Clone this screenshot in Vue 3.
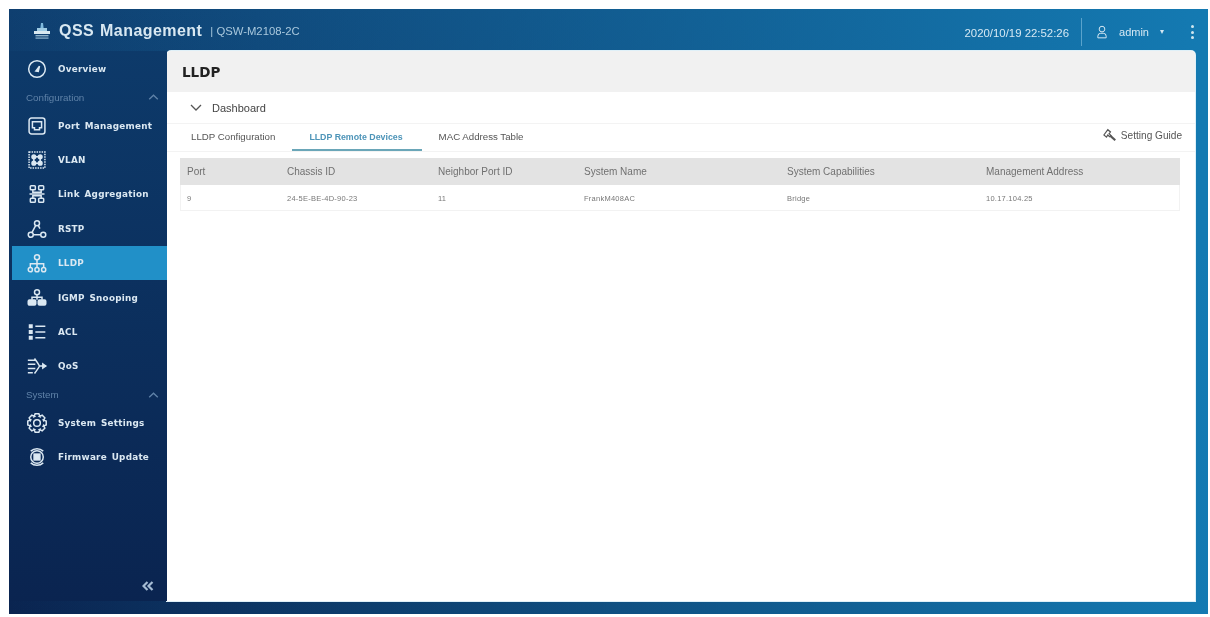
<script setup>
const navTop = [{ key: "overview", label: "Overview" }];
const navConfig = [
  { key: "port", label: "Port Management" },
  { key: "vlan", label: "VLAN" },
  { key: "lag", label: "Link Aggregation" },
  { key: "rstp", label: "RSTP" },
  { key: "lldp", label: "LLDP", active: true },
  { key: "igmp", label: "IGMP Snooping" },
  { key: "acl", label: "ACL" },
  { key: "qos", label: "QoS" }
];
const navSystem = [
  { key: "settings", label: "System Settings" },
  { key: "firmware", label: "Firmware Update" }
];

const tabs = [
  { label: "LLDP Configuration" },
  { label: "LLDP Remote Devices", active: true },
  { label: "MAC Address Table" }
];

const columns = ["Port", "Chassis ID", "Neighbor Port ID", "System Name", "System Capabilities", "Management Address"];
const rows = [["9", "24-5E-BE-4D-90-23", "11", "FrankM408AC", "Bridge", "10.17.104.25"]];

// eight teeth around the centre of the 24 box
const gearPath = () => {
  const pts = [];
  for (let i = 0; i < 8; i++) {
    const a = (i * Math.PI) / 4;
    [[-0.42, 8.4], [-0.2, 11.3], [0.2, 11.3], [0.42, 8.4]].forEach(([da, r]) => {
      pts.push(`${(12 + r * Math.sin(a + da)).toFixed(2)} ${(12 - r * Math.cos(a + da)).toFixed(2)}`);
    });
  }
  return `M${pts.join("L")}Z`;
};

// icon bodies, all on a 24x24 box
const icons = {
  overview: '<circle cx="12" cy="12" r="10"/><path d="M10.5 14.5 L15 8.5 L13.5 15 Z" fill="currentColor"/>',
  port: '<rect x="2.5" y="2.5" width="19" height="19" rx="3"/><path d="M6.5 7h11v7h-2.5v2.5h-6v-2.5h-2.5z"/>',
  vlan: '<rect x="2.5" y="2.5" width="19" height="19" stroke-dasharray="1.8 1.2"/><circle cx="8.2" cy="8.2" r="2.2" fill="currentColor"/><circle cx="15.8" cy="8.2" r="2.2" fill="currentColor"/><circle cx="8.2" cy="15.8" r="2.2" fill="currentColor"/><circle cx="15.8" cy="15.8" r="2.2" fill="currentColor"/><path d="M10.4 8.2h3.2M10.4 15.8h3.2M8.2 10.4v3.2M15.8 10.4v3.2"/>',
  lag: '<rect x="4" y="2" width="6" height="5" rx="1"/><rect x="14" y="2" width="6" height="5" rx="1"/><rect x="4" y="17" width="6" height="5" rx="1"/><rect x="14" y="17" width="6" height="5" rx="1"/><path d="M7 7v3h10V7M7 17v-3h10v3M3 12h18"/>',
  rstp: '<circle cx="12" cy="5" r="3"/><circle cx="4.5" cy="19" r="3"/><circle cx="19.5" cy="19" r="3"/><path d="M10.5 7.6 5.9 16.4M7.5 19h9M13.5 7.6l2 4" />',
  lldp: '<circle cx="12" cy="5" r="3"/><circle cx="4" cy="20" r="2.5"/><circle cx="12" cy="20" r="2.5"/><circle cx="20" cy="20" r="2.5"/><path d="M12 8v9.5M4 17.5V13h16v4.5"/>',
  igmp: '<circle cx="12" cy="5" r="3"/><path d="M12 8v6M6 14V11h12v3"/><rect x="1.5" y="14.5" width="9" height="6" rx="1.5" fill="currentColor"/><rect x="13.5" y="14.5" width="9" height="6" rx="1.5" fill="currentColor"/>',
  acl: '<path d="M10 5h12M10 12h12M10 19h12"/><path d="M3 3.5h3v3H3zM3 10.5h3v3H3zM3 17.5h3v3H3z" fill="currentColor"/>',
  qos: '<path d="M1 5h9M1 10h9M1 15h9M1 20h6M9 3c3 4 5 7 6 9-1 2-3 5-6 9M15 12h8"/><path d="M19 9.5v5l3.5-2.5z" fill="currentColor"/>',
  settings: `<circle cx="12" cy="12" r="4"/><path d="${gearPath()}"/>`,
  firmware: '<path d="M4.5 5a11 11 0 0 1 15 0M19.5 19a11 11 0 0 1-15 0"/><circle cx="12" cy="12" r="7.5"/><rect x="8.5" y="8.5" width="7" height="7" fill="currentColor"/>'
};
</script>

<template>
  <div class="frame">
    <header class="topbar">
      <div class="brand">
        <svg class="logo" viewBox="0 0 16 16">
          <path d="M7 0h2l.6 5H6.4z" fill="#7fb9dc" />
          <rect x="3" y="5" width="10" height="3" fill="#9fcbe3" />
          <rect x="0" y="8" width="16" height="3" fill="#d8e8f0" />
          <rect x="1.5" y="12" width="13" height="1.4" fill="#8fb2ca" />
          <rect x="1.5" y="14.4" width="13" height="1.4" fill="#7fa5c0" />
        </svg>
        <span class="brand-name">QSS Management</span>
        <span class="brand-model">| QSW-M2108-2C</span>
      </div>
      <div class="status">
        <span class="clock">2020/10/19 22:52:26</span>
        <span class="divider"></span>
        <svg class="user-icon" viewBox="0 0 12 16" fill="none" stroke="currentColor" stroke-width="1.2">
          <circle cx="6" cy="4.5" r="3.4" />
          <path d="M1 15v-2a3.5 3.5 0 0 1 3.5-3.5h3A3.5 3.5 0 0 1 11 13v2z" />
        </svg>
        <span class="user">admin</span>
        <span class="caret"></span>
        <span class="kebab"><i></i><i></i><i></i></span>
      </div>
    </header>

    <div class="body">
      <aside class="sidebar">
        <a v-for="item in navTop" :key="item.key" class="nav-item">
          <svg class="nav-icon" viewBox="0 0 24 24" fill="none" stroke="currentColor" stroke-width="1.8" v-html="icons[item.key]"></svg>
          <span>{{ item.label }}</span>
        </a>
        <div class="nav-group">
          <span>Configuration</span>
          <svg class="group-arrow" viewBox="0 0 12 7" fill="none" stroke="currentColor" stroke-width="1.6"><path d="M1 6l5-4.5L11 6" /></svg>
        </div>
        <a v-for="item in navConfig" :key="item.key" :class="['nav-item', { 'nav-item-active': item.active }]">
          <svg class="nav-icon" viewBox="0 0 24 24" fill="none" stroke="currentColor" stroke-width="1.8" v-html="icons[item.key]"></svg>
          <span>{{ item.label }}</span>
        </a>
        <div class="nav-group">
          <span>System</span>
          <svg class="group-arrow" viewBox="0 0 12 7" fill="none" stroke="currentColor" stroke-width="1.6"><path d="M1 6l5-4.5L11 6" /></svg>
        </div>
        <a v-for="item in navSystem" :key="item.key" class="nav-item">
          <svg class="nav-icon" viewBox="0 0 24 24" fill="none" stroke="currentColor" stroke-width="1.8" v-html="icons[item.key]"></svg>
          <span>{{ item.label }}</span>
        </a>
        <div class="collapse">
          <svg viewBox="0 0 12 10" fill="none" stroke="currentColor" stroke-width="2.2"><path d="M5.5 1L1.5 5l4 4M10.5 1l-4 4 4 4" /></svg>
        </div>
      </aside>

      <main class="card">
        <h1 class="page-title">LLDP</h1>
        <div class="dashboard">
          <svg class="chevron" viewBox="0 0 12 7" fill="none" stroke="currentColor" stroke-width="1.3"><path d="M1 1l5 5 5-5" /></svg>
          <span>Dashboard</span>
        </div>
        <div class="tabs">
          <div v-for="tab in tabs" :key="tab.label" :class="['tab', { 'tab-active': tab.active }]">{{ tab.label }}</div>
          <div class="guide">
            <svg class="guide-icon" viewBox="0 0 16 16" fill="none" stroke="currentColor" stroke-width="1.4">
              <path d="M1 8l4.5-6 3 2.5L7 6.5l2 2-1.5 1.5-2-2L4 10.5z" />
              <path d="M8.5 9l5.5 5" stroke-width="2.4" />
            </svg>
            <span>Setting Guide</span>
          </div>
        </div>
        <div class="table">
          <div class="table-row table-head">
            <div v-for="col in columns" :key="col" class="cell">{{ col }}</div>
          </div>
          <div v-for="row in rows" :key="row[1]" class="table-row table-line">
            <div v-for="(value, i) in row" :key="i" class="cell">{{ value }}</div>
          </div>
        </div>
      </main>
    </div>
  </div>
</template>

<style scoped>
.frame {
  margin: 9px 2px 3px 9px;
  height: 605px;
  display: flex;
  flex-direction: column;
  background:
    linear-gradient(90deg, rgba(15, 60, 110, 0) 0%, rgba(20, 122, 178, 1) 100%),
    linear-gradient(180deg, #0f3f70 0%, #0a2450 100%);
  filter: blur(0.5px);
  overflow: hidden;
}

.topbar {
  box-sizing: border-box;
  height: 42px;
  flex: none;
  display: flex;
  align-items: center;
  justify-content: space-between;
  padding: 4px 14px 0 25px;
}

.brand {
  display: flex;
  align-items: center;
  margin-top: -3px;
}

.logo {
  width: 16px;
  height: 16px;
  margin-right: 9px;
}

.brand-name {
  font-family: "Liberation Sans", Arial, sans-serif;
  font-weight: 700;
  font-size: 16px;
  color: #d8e8f2;
  letter-spacing: 0.45px;
  word-spacing: 1px;
}

.brand-model {
  font-family: "Liberation Sans", Arial, sans-serif;
  font-size: 11.3px;
  color: #a9c8dd;
  margin-left: 8px;
  margin-top: 1px;
}

.status {
  display: flex;
  align-items: center;
  font-family: "Liberation Sans", Arial, sans-serif;
  color: #d5e8f3;
  font-size: 11px;
}

.clock {
  font-size: 11.4px;
  margin-top: 1px;
}

.divider {
  width: 1px;
  height: 28px;
  background: #5aa3cc;
  margin: 0 15px 0 12px;
}

.user-icon {
  width: 10px;
  height: 14px;
  margin-right: 12px;
}

.caret {
  width: 0;
  height: 0;
  border-left: 2.5px solid transparent;
  border-right: 2.5px solid transparent;
  border-top: 4px solid #d5e8f3;
  margin: 0 27px 0 11px;
}

.kebab {
  display: flex;
  flex-direction: column;
  gap: 2.5px;
}

.kebab i {
  display: block;
  width: 3px;
  height: 3px;
  background: #cfe6ef;
  border-radius: 50%;
}

.body {
  flex: 1;
  display: flex;
  min-height: 0;
  padding: 0 13px 13px 0;
}

.sidebar {
  width: 158px;
  flex: none;
  position: relative;
  background: linear-gradient(180deg, #0d3a6a 0%, #0a2450 100%);
  padding-top: 1px;
  font-family: "DejaVu Sans", sans-serif;
}

.nav-item {
  height: 34.4px;
  margin-left: 3px;
  padding-left: 15px;
  display: flex;
  align-items: center;
  color: #dbe8f2;
  font-size: 8.8px;
  font-weight: 700;
  letter-spacing: 0.25px;
  word-spacing: 1.5px;
}

.nav-item-active {
  background: #2190c8;
}

.nav-icon {
  width: 20px;
  height: 20px;
  margin-right: 11px;
  flex: none;
}

.nav-group {
  height: 22px;
  padding: 0 8px 0 17px;
  display: flex;
  align-items: center;
  justify-content: space-between;
  font-family: "Liberation Sans", Arial, sans-serif;
  font-size: 9.8px;
  color: #5f82a8;
}

.group-arrow {
  width: 11px;
  height: 6px;
}

.collapse {
  position: absolute;
  right: 13px;
  bottom: 10px;
  color: #a5bcd4;
  width: 12px;
  height: 10px;
}

.collapse svg {
  display: block;
  width: 12px;
  height: 10px;
}

.card {
  flex: 1;
  min-width: 0;
  background: #fff;
  border-radius: 4px 4px 0 0;
  box-shadow: 0 0 0 1px #dff0f8;
  display: flex;
  flex-direction: column;
  font-family: "Liberation Sans", Arial, sans-serif;
  color: #555;
}

.page-title {
  margin: 0;
  height: 41px;
  flex: none;
  background: #f1f1f1;
  border-radius: 4px 4px 0 0;
  padding: 0 15px;
  display: flex;
  align-items: center;
  font-family: "DejaVu Sans", sans-serif;
  font-size: 13.5px;
  font-weight: 700;
  color: #222;
}

.dashboard {
  height: 31px;
  flex: none;
  display: flex;
  align-items: center;
  padding-left: 23px;
  font-size: 11px;
  color: #444;
  border-bottom: 1px solid #f3f3f3;
}

.chevron {
  width: 12px;
  height: 7px;
  margin-right: 10px;
  color: #555;
}

.tabs {
  height: 27px;
  flex: none;
  display: flex;
  align-items: stretch;
  padding-left: 13px;
  border-bottom: 1px solid #f3f3f3;
}

.tab {
  display: flex;
  align-items: center;
  font-size: 9.7px;
  color: #555;
  margin-right: 17px;
  border-bottom: 2px solid transparent;
}

.tab:first-child {
  margin-left: 11px;
}

.tab-active {
  color: #4d94b8;
  border-bottom-color: #6aa6b8;
  padding: 0 19px 0 17px;
  font-weight: 700;
  font-size: 8.8px;
}

.guide {
  margin-left: auto;
  display: flex;
  align-items: center;
  padding: 0 13px 5px 0;
  font-size: 10.1px;
  color: #555;
}

.guide-icon {
  width: 14px;
  height: 14px;
  margin-right: 4px;
}

.table {
  margin: 6px 15px 0 13px;
}

.table-row {
  display: grid;
  grid-template-columns: 100px 151px 146px 203px 199px 201px;
  align-items: center;
}

.table-head {
  height: 27px;
  background: #e3e3e3;
  font-size: 10px;
  color: #707070;
}

.table-line {
  height: 26px;
  font-size: 7.5px;
  letter-spacing: 0.25px;
  color: #777;
  box-shadow: inset 0 -1px 0 #f2f2f2, inset 1px 0 0 #f2f2f2, inset -1px 0 0 #f2f2f2;
}

.cell {
  padding-left: 7px;
  white-space: nowrap;
}
</style>

<style>
html, body {
  background: #fff;
}
</style>
